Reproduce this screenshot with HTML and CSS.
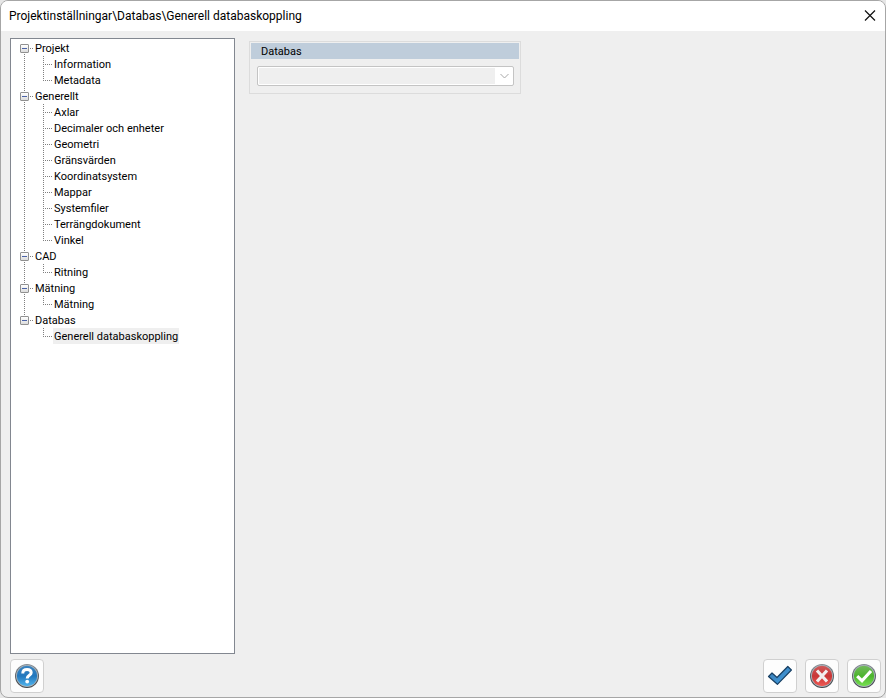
FILE: index.html
```html
<!DOCTYPE html>
<html lang="sv">
<head>
  <meta charset="UTF-8">
  <meta name="viewport" content="width=device-width, initial-scale=1">
  <title>Projektinställningar</title>
  <link rel="stylesheet" href="styles.css">
</head>
<body>

<div class="window">
  <header class="titlebar">
    <h1 class="title">Projektinställningar\Databas\Generell databaskoppling</h1>
    <button class="close" type="button" aria-label="Stäng">
      <svg width="12" height="12" viewBox="0 0 12 12"><path d="M1 0.5L11 10.5M11 0.5L1 10.5" stroke="#111" stroke-width="1.2" fill="none"/></svg>
    </button>
  </header>

  <main class="content">
    <nav class="tree">
      <ul class="groups">
        <li class="group">
          <div class="group-head"><button class="toggle" type="button" aria-label="Fäll ihop Projekt"></button><a href="#">Projekt</a></div>
          <ul class="items">
            <li><a href="#">Information</a></li>
            <li><a href="#">Metadata</a></li>
          </ul>
        </li>
        <li class="group">
          <div class="group-head"><button class="toggle" type="button" aria-label="Fäll ihop Generellt"></button><a href="#">Generellt</a></div>
          <ul class="items">
            <li><a href="#">Axlar</a></li>
            <li><a href="#">Decimaler och enheter</a></li>
            <li><a href="#">Geometri</a></li>
            <li><a href="#">Gränsvärden</a></li>
            <li><a href="#">Koordinatsystem</a></li>
            <li><a href="#">Mappar</a></li>
            <li><a href="#">Systemfiler</a></li>
            <li><a href="#">Terrängdokument</a></li>
            <li><a href="#">Vinkel</a></li>
          </ul>
        </li>
        <li class="group">
          <div class="group-head"><button class="toggle" type="button" aria-label="Fäll ihop CAD"></button><a href="#">CAD</a></div>
          <ul class="items">
            <li><a href="#">Ritning</a></li>
          </ul>
        </li>
        <li class="group">
          <div class="group-head"><button class="toggle" type="button" aria-label="Fäll ihop Mätning"></button><a href="#">Mätning</a></div>
          <ul class="items">
            <li><a href="#">Mätning</a></li>
          </ul>
        </li>
        <li class="group">
          <div class="group-head"><button class="toggle" type="button" aria-label="Fäll ihop Databas"></button><a href="#">Databas</a></div>
          <ul class="items">
            <li><a class="selected" href="#">Generell databaskoppling</a></li>
          </ul>
        </li>
      </ul>
    </nav>

    <section class="panel">
      <div class="box">
        <label class="box-title" for="database">Databas</label>
        <div class="select-wrap">
          <select id="database" disabled></select>
          <svg class="arrow" width="9" height="6" viewBox="0 0 9 6"><path d="M0.5 1L4.5 5L8.5 1" stroke="#a8a8a8" fill="none"/></svg>
        </div>
      </div>
    </section>
  </main>

  <footer class="actions">
    <button class="action help" type="button" aria-label="Hjälp">
      <svg width="26" height="26" viewBox="0 0 26 26">
        <defs>
          <linearGradient id="rim" x1="0" y1="0" x2="0" y2="1"><stop offset="0" stop-color="#8a9096"/><stop offset="0.5" stop-color="#5d6268"/><stop offset="1" stop-color="#3e4246"/></linearGradient>
          <linearGradient id="blue" x1="0" y1="0" x2="0" y2="1"><stop offset="0" stop-color="#3b83bf"/><stop offset="0.5" stop-color="#2478bd"/><stop offset="1" stop-color="#4fb4ee"/></linearGradient>
        </defs>
        <circle cx="13" cy="13" r="12" fill="url(#rim)"/>
        <circle cx="13" cy="13" r="11" fill="#a9b4bb"/>
        <circle cx="13" cy="13" r="10.2" fill="url(#blue)"/>
        <path d="M8.8 10.4C8.8 7.6 10.8 6.6 13.1 6.6C15.6 6.6 17.2 7.9 17.2 9.8C17.2 12.4 13.2 12.2 13.2 15.4" stroke="#fff" stroke-width="3" fill="none"/>
        <circle cx="13.2" cy="18.6" r="1.9" fill="#fff"/>
      </svg>
    </button>
    <button class="action" type="button" aria-label="Verkställ">
      <svg width="26" height="26" viewBox="0 0 26 26">
        <defs><linearGradient id="check" x1="0" y1="0" x2="1" y2="1"><stop offset="0" stop-color="#3a78ad"/><stop offset="1" stop-color="#41a0e6"/></linearGradient></defs>
        <path d="M1.5 13.5L5 10L10 14.5L20.8 3.5L24.4 7L10.4 21.3Z" fill="url(#check)" stroke="#173f63" stroke-width="1.2" stroke-linejoin="round"/>
      </svg>
    </button>
    <button class="action" type="button" aria-label="Avbryt">
      <svg width="26" height="26" viewBox="0 0 26 26">
        <defs><linearGradient id="red" x1="0" y1="0" x2="0" y2="1"><stop offset="0" stop-color="#cf5a5a"/><stop offset="0.5" stop-color="#c93636"/><stop offset="1" stop-color="#ee5b55"/></linearGradient></defs>
        <circle cx="13" cy="13" r="12" fill="url(#rim)"/>
        <circle cx="13" cy="13" r="11" fill="#a9b4bb"/>
        <circle cx="13" cy="13" r="10.2" fill="url(#red)"/>
        <path d="M8 7.5L18 18.5M18 7.5L8 18.5" stroke="#f2eeee" stroke-width="3.2" fill="none"/>
      </svg>
    </button>
    <button class="action" type="button" aria-label="OK">
      <svg width="26" height="26" viewBox="0 0 26 26">
        <defs><linearGradient id="green" x1="0" y1="0" x2="0" y2="1"><stop offset="0" stop-color="#72b95c"/><stop offset="0.5" stop-color="#4cb52e"/><stop offset="1" stop-color="#78e052"/></linearGradient></defs>
        <circle cx="13" cy="13" r="12" fill="url(#rim)"/>
        <circle cx="13" cy="13" r="11" fill="#a9b4bb"/>
        <circle cx="13" cy="13" r="10.2" fill="url(#green)"/>
        <path d="M6.2 13.2L11 17.8L20 8" stroke="#fff" stroke-width="3.2" fill="none"/>
      </svg>
    </button>
  </footer>
</div>

</body>
</html>
```
FILE: styles.css
```css
* {
  box-sizing: border-box;
}

body {
  margin: 0;
  background: #e6e6e6;
  color: #000;
  font-family: Tahoma, Roboto, sans-serif;
  font-size: 11px;
  line-height: 14px;
}

ul {
  list-style: none;
  margin: 0;
  padding: 0;
}

a {
  color: inherit;
  text-decoration: none;
}

button {
  padding: 0;
  font: inherit;
}

.window {
  display: flex;
  flex-direction: column;
  min-height: 100vh;
  background: #efefef;
  border: 1px solid #a6a6a6;
  border-radius: 8px;
  overflow: hidden;
}

/* title bar */
.titlebar {
  display: flex;
  align-items: center;
  justify-content: space-between;
  height: 30px;
  padding: 0 9px 0 8px;
  background: #fff;
}

.title {
  margin: 0;
  font-size: 12px;
  font-weight: normal;
}

.close {
  display: flex;
  border: none;
  background: none;
}

.content {
  flex: 1;
  display: grid;
  grid-template-columns: 225px 1fr;
  gap: 14px;
  padding: 7px 9px 5px;
}

/* tree */
.tree {
  padding: 1px 9px;
  background: #fff;
  border: 1px solid #828790;
}

.group {
  background: repeating-linear-gradient(#808080 0 1px, transparent 1px 2px) 4px 0 / 1px 100% no-repeat;
}

.group:first-child {
  background-position: 4px 8px;
}

.group:last-child {
  background-size: 1px 8px;
}

.group-head {
  display: flex;
  align-items: center;
  height: 16px;
  background: repeating-linear-gradient(90deg, #808080 0 1px, transparent 1px 2px) 10px 8px / 3px 1px no-repeat;
}

.group-head a {
  padding: 2px 0 0 6px;
}

.toggle {
  width: 9px;
  height: 9px;
  border: 1px solid #919191;
  border-radius: 1px;
  background: linear-gradient(#4b63a7, #4b63a7) center / 5px 1px no-repeat, linear-gradient(#fff, #dcdcdc);
}

.items {
  margin-left: 23px;
}

.items li {
  padding-left: 10px;
  background:
    repeating-linear-gradient(#808080 0 1px, transparent 1px 2px) 0 0 / 1px 100% no-repeat,
    repeating-linear-gradient(90deg, #808080 0 1px, transparent 1px 2px) 0 8px / 9px 1px no-repeat;
}

.items li:last-child {
  background-size: 1px 8px, 9px 1px;
}

.items a {
  display: inline-block;
  padding: 2px 1px 0;
  vertical-align: top;
}

.items .selected {
  background: #efefef;
}

/* settings panel */
.panel {
  padding-top: 3px;
}

.box {
  max-width: 272px;
  padding: 1px 1px 7px;
  border: 1px solid #dcdcdc;
}

.box-title {
  display: block;
  padding: 2px 0 0 10px;
  background: #bfcddb;
}

.select-wrap {
  display: grid;
  align-items: center;
  margin: 7px 5px 0 6px;
}

.select-wrap select {
  grid-area: 1 / 1;
  width: 100%;
  height: 20px;
  padding: 0;
  appearance: none;
  border: 1px solid #c4c4c4;
  border-radius: 2px;
  background: #efefef;
  box-shadow: inset 0 0 0 1px #fff, inset -18px 0 #fff;
  opacity: 1;
}

.arrow {
  grid-area: 1 / 1;
  justify-self: end;
  margin-right: 5px;
  pointer-events: none;
}

/* bottom buttons */
.actions {
  display: flex;
  gap: 8px;
  padding: 0 4px 4px 9px;
}

.action {
  display: flex;
  align-items: center;
  justify-content: center;
  width: 34px;
  height: 34px;
  border: 1px solid #d0d0d0;
  border-radius: 4px;
  background: #fdfdfd;
}

.help {
  margin-right: auto;
}
```
